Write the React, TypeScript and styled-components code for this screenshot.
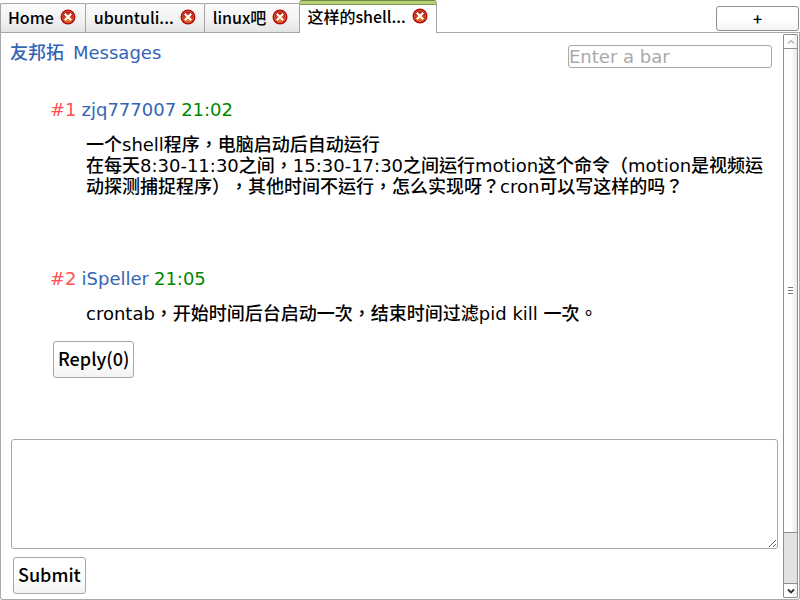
import React from "react";
import styled, { createGlobalStyle, css } from "styled-components";

const uiFont = `"Noto Sans CJK TC", "Noto Sans CJK SC", sans-serif`;
const pageFont = `"DejaVu Sans", "Noto Sans CJK TC", "Noto Sans CJK SC", sans-serif`;

const GlobalStyle = createGlobalStyle`
  *, *::before, *::after { box-sizing: border-box; }
  body {
    margin: 0;
    background: #fff;
    color: #000;
    font: 500 18px/21px ${pageFont};
    text-spacing-trim: space-all;
  }
  button, input, textarea { font: inherit; color: inherit; margin: 0; }
`;

const Window = styled.div`
  display: flex;
  flex-direction: column;
  height: 100vh;
`;

const TabBar = styled.header`
  display: flex;
  justify-content: space-between;
  align-items: flex-end;
  height: 33px;
  flex: none;
  box-shadow: inset 0 -1px 0 #a9a9a9;
  font: 500 16px/22px ${uiFont};
`;

const Tabs = styled.nav`
  display: flex;
  align-items: flex-end;
  height: 100%;
`;

const Tab = styled.div<{ $active?: boolean; $beforeActive?: boolean }>`
  display: flex;
  align-items: center;
  gap: 6px;
  height: 30px;
  padding: 0 ${(p) => (p.$beforeActive ? 11 : 8)}px 2px 8px;
  border: solid #a5a5a5;
  border-width: 1px 0 1px 1px;
  border-top-left-radius: 2px;
  background: linear-gradient(#fbfbfb, #f4f4f4 50%, #e4e4e4);
  &:first-child {
    padding-left: 7px;
    padding-right: 9px;
  }
  ${(p) =>
    p.$active &&
    css`
      height: 33px;
      padding-left: 7px;
      border-width: 0 1px;
      border-radius: 3px 3px 0 0;
      background: linear-gradient(#6f8b3d 0 1px, #b5d078 1px 4px, #7d984b 4px 5px, #fff 5px);
    `}
`;

const TabLabel = styled.button`
  padding: 0;
  border: 0;
  background: none;
  white-space: nowrap;
`;

const CloseButton = styled.button`
  display: flex;
  padding: 0;
  border: 0;
  background: none;
`;

const buttonFace = css`
  border: 1px solid #a8a8a8;
  border-radius: 3px;
  background: linear-gradient(#fff 50%, #f3f3f3);
`;

const NewTabButton = styled.button`
  ${buttonFace}
  border-color: #8f8f8f;
  width: 83px;
  height: 25px;
  padding: 0 0 2px;
  margin: 0 1px 2px 0;
  line-height: 20px;
`;

const Panel = styled.div`
  display: flex;
  flex: 1;
  min-height: 0;
  border: solid #a9a9a9;
  border-width: 0 1px 1px;
  border-radius: 0 0 3px 3px;
`;

const Page = styled.main`
  display: flex;
  flex-direction: column;
  flex: 1;
  min-width: 0;
  overflow: hidden;
  padding: 9px 5px 0 9px;
`;

const PageHeader = styled.div`
  display: flex;
  justify-content: space-between;
  align-items: flex-start;
  height: 27px;
`;

const Links = styled.nav`
  display: flex;
  gap: 9px;
`;

const PageLink = styled.a`
  color: #3465b5;
  text-decoration: none;
`;

const BarInput = styled.input`
  width: 204px;
  height: 23px;
  margin: 3px 6px 0 0;
  padding: 0;
  border: 1px solid #a8a8a8;
  border-radius: 3px;
  background: #fff;
  font-weight: 400;
  &::placeholder { color: #a9a9a9; opacity: 1; }
`;

const Post = styled.article`
  padding: 0 8px 0 40px;
  margin-top: 30px;
  & + & { margin-top: 71px; }
`;

const PostHeader = styled.div`
  display: flex;
  gap: 5px;
`;

const PostNumber = styled.span`
  color: #ff5252;
`;

const PostTime = styled.time`
  color: #008800;
`;

const PostBody = styled.p`
  margin: 14px 0 0;
  padding-left: 36px;
`;

const ActionButton = styled.button`
  ${buttonFace}
  align-self: flex-start;
  height: 37px;
  padding: 0 4px 2px;
  font: 500 18px/33px ${uiFont};
`;

const ReplyButton = styled(ActionButton)`
  margin: 17px 0 0 3px;
`;

const Composer = styled.form`
  display: flex;
  flex-direction: column;
  margin-top: 61px;
`;

const MessageBox = styled.textarea`
  height: 110px;
  margin-left: 1px;
  padding: 2px;
  border: 1px solid #a8a8a8;
  border-radius: 3px;
  background: #fff;
  resize: vertical;
`;

const SubmitButton = styled(ActionButton)`
  margin: 8px 0 0 3px;
`;

const ScrollBar = styled.div`
  display: flex;
  flex-direction: column;
  flex: none;
  width: 15px;
  margin: 1px 1px 1px 0;
  border: 1px solid #8f8f8f;
  border-radius: 1px;
  background: #e2e2e2;
`;

const ScrollArrow = styled.button`
  display: flex;
  align-items: center;
  justify-content: center;
  flex: none;
  height: 13px;
  padding: 0;
  border: 0;
  background: linear-gradient(90deg, #fff 50%, #eee);
`;

const ScrollTrack = styled.div`
  display: grid;
  grid-template-rows: 29fr 3fr;
  flex: 1;
  border: solid #8f8f8f;
  border-width: 1px 0;
`;

const ScrollThumb = styled.div`
  display: flex;
  align-items: center;
  justify-content: center;
  border-bottom: 1px solid #8f8f8f;
  background: linear-gradient(90deg, #fff 50%, #eaeaea);
`;

const CloseIcon = () => (
  <svg width="16" height="16" viewBox="0 0 16 16" aria-hidden="true">
    <defs>
      <radialGradient id="closeFill" cx="50%" cy="75%" r="60%">
        <stop offset="0" stopColor="#ea7d18" />
        <stop offset="0.6" stopColor="#cc4a18" />
        <stop offset="1" stopColor="#b8281c" />
      </radialGradient>
    </defs>
    <circle cx="8" cy="8" r="7.5" fill="#b80606" />
    <circle cx="8" cy="8" r="5.8" fill="url(#closeFill)" stroke="#d4705c" strokeWidth="0.6" />
    <path d="M4.8 4.8l6.4 6.4M11.2 4.8l-6.4 6.4" stroke="#fff" strokeWidth="2" />
  </svg>
);

const Chevron = ({ up }: { up?: boolean }) => (
  <svg width="8" height="6" viewBox="0 0 8 6" fill="none" aria-hidden="true">
    <path
      d={up ? "M1 4.5L4 1.5L7 4.5" : "M1 1.5L4 4.5L7 1.5"}
      stroke={up ? "#b0b0b0" : "#303030"}
      strokeWidth={up ? 1.2 : 1.8}
    />
  </svg>
);

const Grip = () => (
  <svg width="5" height="7" viewBox="0 0 5 7" aria-hidden="true">
    <path d="M0 .5h5M0 3.5h5M0 6.5h5" stroke="#777" />
  </svg>
);

const tabs = [
  { label: "Home" },
  { label: "ubuntuli..." },
  { label: "linux吧" },
  { label: "这样的shell...", active: true },
];

const posts = [
  {
    id: 1,
    author: "zjq777007",
    time: "21:02",
    lines: [
      "一个shell程序，电脑启动后自动运行",
      "在每天8:30-11:30之间，15:30-17:30之间运行motion这个命令（motion是视频运动探测捕捉程序），其他时间不运行，怎么实现呀？cron可以写这样的吗？",
    ],
  },
  {
    id: 2,
    author: "iSpeller",
    time: "21:05",
    lines: ["crontab，开始时间后台启动一次，结束时间过滤pid kill 一次。"],
    replies: 0,
  },
];

export default function App() {
  return (
    <>
      <GlobalStyle />
      <Window>
        <TabBar>
          <Tabs aria-label="Tabs">
            {tabs.map((tab, i) => (
              <Tab key={tab.label} $active={tab.active} $beforeActive={tabs[i + 1]?.active}>
                <TabLabel type="button">{tab.label}</TabLabel>
                <CloseButton type="button" aria-label={`Close ${tab.label}`}>
                  <CloseIcon />
                </CloseButton>
              </Tab>
            ))}
          </Tabs>
          <NewTabButton type="button" aria-label="New tab">+</NewTabButton>
        </TabBar>
        <Panel>
          <Page>
            <PageHeader>
              <Links>
                <PageLink href="#profile">友邦拓</PageLink>
                <PageLink href="#messages">Messages</PageLink>
              </Links>
              <BarInput type="text" placeholder="Enter a bar" aria-label="Enter a bar" />
            </PageHeader>
            {posts.map((post) => (
              <Post key={post.id}>
                <PostHeader>
                  <PostNumber>#{post.id}</PostNumber>
                  <PageLink href={`#${post.author}`}>{post.author}</PageLink>
                  <PostTime>{post.time}</PostTime>
                </PostHeader>
                <PostBody>
                  {post.lines.map((line, i) => (
                    <React.Fragment key={line}>
                      {i > 0 && <br />}
                      {line}
                    </React.Fragment>
                  ))}
                </PostBody>
                {post.replies !== undefined && (
                  <ReplyButton type="button">{`Reply(${post.replies})`}</ReplyButton>
                )}
              </Post>
            ))}
            <Composer onSubmit={(e) => e.preventDefault()}>
              <MessageBox aria-label="Message" />
              <SubmitButton type="submit">Submit</SubmitButton>
            </Composer>
          </Page>
          <ScrollBar>
            <ScrollArrow type="button" aria-label="Scroll up">
              <Chevron up />
            </ScrollArrow>
            <ScrollTrack>
              <ScrollThumb>
                <Grip />
              </ScrollThumb>
            </ScrollTrack>
            <ScrollArrow type="button" aria-label="Scroll down">
              <Chevron />
            </ScrollArrow>
          </ScrollBar>
        </Panel>
      </Window>
    </>
  );
}
